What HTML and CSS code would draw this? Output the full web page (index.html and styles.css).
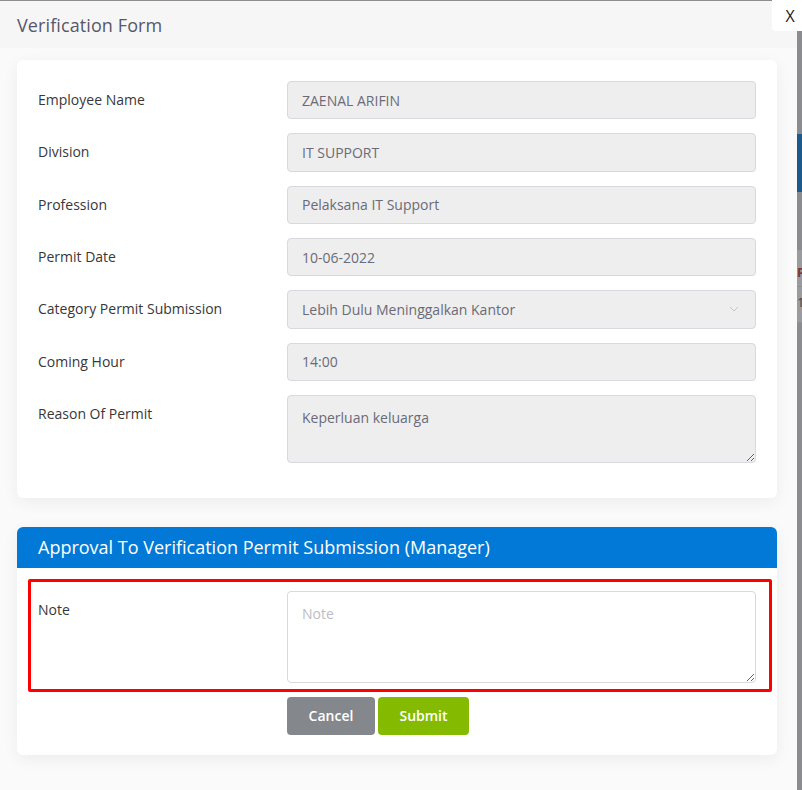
FILE: index.html
```html
<!DOCTYPE html>
<html>
<head>
<meta charset="utf-8">
<link rel="stylesheet" href="styles.css">
</head>
<body>
<div class="modal">
  <div class="modal-header">
    <h1 class="modal-title">Verification Form</h1>
  </div>
  <div class="modal-body">
    <div class="card">
      <div class="form-row">
        <label class="label">Employee Name</label>
        <input class="input" type="text" value="ZAENAL ARIFIN" disabled>
      </div>
      <div class="form-row">
        <label class="label">Division</label>
        <input class="input" type="text" value="IT SUPPORT" disabled>
      </div>
      <div class="form-row">
        <label class="label">Profession</label>
        <input class="input" type="text" value="Pelaksana IT Support" disabled>
      </div>
      <div class="form-row">
        <label class="label">Permit Date</label>
        <input class="input" type="text" value="10-06-2022" disabled>
      </div>
      <div class="form-row">
        <label class="label">Category Permit Submission</label>
        <div class="select">
          <span>Lebih Dulu Meninggalkan Kantor</span>
          <svg class="chev" width="10" height="6" viewBox="0 0 10 6"><path d="M1 1l4 4 4-4" fill="none" stroke="#c4c4c8" stroke-width="1"/></svg>
        </div>
      </div>
      <div class="form-row">
        <label class="label">Coming Hour</label>
        <input class="input" type="text" value="14:00" disabled>
      </div>
      <div class="form-row">
        <label class="label">Reason Of Permit</label>
        <textarea class="input textarea" disabled>Keperluan keluarga</textarea>
      </div>
    </div>

    <div class="card card-approval">
      <div class="card-head">Approval To Verification Permit Submission (Manager)</div>
      <div class="card-content">
        <div class="highlight">
          <div class="form-row">
            <label class="label">Note</label>
            <textarea class="input textarea note" placeholder="Note"></textarea>
          </div>
        </div>
        <div class="actions">
          <button class="btn btn-cancel">Cancel</button>
          <button class="btn btn-submit">Submit</button>
        </div>
      </div>
    </div>
  </div>
  <button class="close">X</button>
</div>
<div class="backdrop">
  <div class="bd-top"></div>
  <div class="bd-blue"></div>
  <div class="bd-gap"></div>
  <div class="bd-row"><span class="bd-p">P</span></div>
  <div class="bd-row bd-row2"><span class="bd-n">1</span></div>
</div>
</body>
</html>
```

FILE: styles.css
```css
* { box-sizing: border-box; }
html, body { margin: 0; padding: 0; }
body {
  display: flex;
  width: 802px;
  height: 790px;
  overflow: hidden;
  background: #8a8c90;
  font-family: "Open Sans", "Noto Sans", sans-serif;
  font-size: 14px;
  color: #3a3a3a;
}
.modal {
  position: relative;
  width: 797px;
  flex: 0 0 797px;
  height: 790px;
  background: #fafafa;
  border-top: 1px solid #8d8d8d;
}
.modal-header {
  height: 47px;
  background: #f6f6f6;
  padding: 0 17px;
  display: flex;
  align-items: center;
}
.modal-title {
  margin: 0;
  font-size: 18px;
  font-weight: 400;
  color: #575869;
  line-height: 24px;
  padding-top: 1px;
  letter-spacing: 0.1px;
}
.close {
  position: absolute;
  top: -1px;
  right: -5px;
  width: 30px;
  height: 31px;
  border: 0;
  border-radius: 0 0 0 4px;
  background: #ffffff;
  font-family: "Open Sans", sans-serif;
  font-size: 16px;
  font-weight: 400;
  color: #222;
  padding: 0 0 0 6px;
  line-height: 30px;
}
.modal-body {
  padding: 12px 20px 0 17px;
  display: flex;
  flex-direction: column;
  gap: 29px;
}
.card {
  width: 760px;
  background: #ffffff;
  border-radius: 6px;
  box-shadow: 0 4px 16px rgba(0,0,0,0.06);
  padding: 21px 21px 35px 21px;
  display: flex;
  flex-direction: column;
  gap: 14px;
}
.form-row {
  display: flex;
  align-items: flex-start;
}
.label {
  width: 249px;
  flex: 0 0 249px;
  padding-top: 9px;
  line-height: 20px;
  font-size: 14px;
  color: #383838;
}
.input {
  width: 469px;
  height: 38.33px;
  background: #eeeeee;
  border: 1px solid #d8d8de;
  border-radius: 4px;
  padding: 0 14px;
  font-family: "Open Sans", sans-serif;
  font-size: 14px;
  color: #6b6b78;
  -webkit-text-fill-color: #6b6b78;
  opacity: 1;
  margin: 0;
}
.select {
  width: 469px;
  height: 38.33px;
  background: #eeeeee;
  border: 1px solid #d8d8de;
  border-radius: 4px;
  padding: 0 14px;
  display: flex;
  align-items: center;
  justify-content: space-between;
  color: #6b6b78;
}
.chev { margin-right: 2px; }
.textarea {
  height: 68px;
  padding: 12px 14px;
  resize: vertical;
  line-height: 20px;
  display: block;
}
.card-approval {
  padding: 0 0 20px 0;
  gap: 0;
}
.card-head {
  height: 41px;
  background: #0279d6;
  border-radius: 6px 6px 0 0;
  color: #ffffff;
  font-size: 18px;
  line-height: 41px;
  padding-left: 21px;
}
.card-content {
  padding: 11px 5px 0 11px;
  display: flex;
  flex-direction: column;
  gap: 5px;
}
.highlight {
  border: 3px solid #ff0000;
  border-radius: 2px;
  padding: 9px 13px 6px 7px;
  width: 744px;
}
.note {
  background: #ffffff;
  height: 92px;
  color: #333;
  -webkit-text-fill-color: initial;
}
.note::placeholder {
  color: #bdbdc6;
}
.actions {
  display: flex;
  gap: 3px;
  padding-left: 259px;
}
.btn {
  height: 38px;
  border: 0;
  border-radius: 4px;
  font-family: "Open Sans", sans-serif;
  font-size: 14px;
  font-weight: 600;
  color: #ffffff;
  padding: 0;
}
.btn-cancel { width: 88px; background: #84878c; }
.btn-submit { width: 91px; background: #84bb00; }

.backdrop {
  flex: 1;
  display: flex;
  flex-direction: column;
}
.bd-top { height: 134px; }
.bd-blue { height: 58px; background: #1d5a8b; }
.bd-gap { height: 58px; }
.bd-row {
  height: 37px;
  background: #999b9e;
  border-bottom: 1px solid #8f9194;
  font-size: 13px;
  line-height: 44px;
  overflow: hidden;
}
.bd-row2 { height: 36px; line-height: 30px; }
.bd-p { color: #7a3a3a; font-weight: 700; }
.bd-n { color: #444; }
```
